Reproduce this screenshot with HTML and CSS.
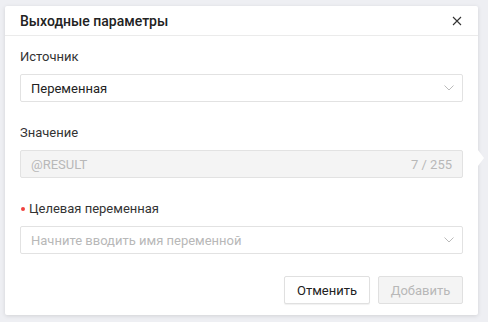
FILE: index.html
```html
<!DOCTYPE html>
<html lang="ru">
<head>
<meta charset="utf-8">
<link rel="stylesheet" href="styles.css">
</head>
<body>
<div class="popover">
  <div class="header">
    <span class="title">Выходные параметры</span>
    <svg class="close" width="10" height="10" viewBox="0 0 10 10"><path d="M1 1L9 9M9 1L1 9" stroke="#333" stroke-width="1.1" fill="none"/></svg>
  </div>
  <div class="body">
    <div class="field">
      <div class="label">Источник</div>
      <div class="input select">
        <span class="value">Переменная</span>
        <svg class="chev" width="10" height="6" viewBox="0 0 10 6"><path d="M0.5 0.5L5 5L9.5 0.5" stroke="#bbb" stroke-width="1" fill="none"/></svg>
      </div>
    </div>
    <div class="field">
      <div class="label">Значение</div>
      <div class="input disabled">
        <span class="value muted">@RESULT</span>
        <span class="counter">7 / 255</span>
      </div>
    </div>
    <div class="field">
      <div class="label required">Целевая переменная</div>
      <div class="input select">
        <span class="value placeholder">Начните вводить имя переменной</span>
        <svg class="chev" width="10" height="6" viewBox="0 0 10 6"><path d="M0.5 0.5L5 5L9.5 0.5" stroke="#bbb" stroke-width="1" fill="none"/></svg>
      </div>
    </div>
    <div class="actions">
      <button class="btn">Отменить</button>
      <button class="btn btn-disabled">Добавить</button>
    </div>
  </div>
  <div class="arrow"></div>
</div>
</body>
</html>
```
FILE: styles.css
```css
* { box-sizing: border-box; }
html, body { margin: 0; padding: 0; }
body {
  width: 488px;
  height: 322px;
  background: #eeeff3;
  font-family: Roboto, "Liberation Sans", sans-serif;
  color: #222;
  padding: 6px 10px 0 5px;
}
.popover {
  position: relative;
  width: 473px;
  height: 309px;
  background: #fff;
  border-radius: 2px;
  box-shadow: 0 1px 4px rgba(0,0,0,0.12);
}
.header {
  height: 30px;
  display: flex;
  align-items: center;
  justify-content: space-between;
  padding: 0 16px 0 15px;
  border-bottom: 1px solid #ebebeb;
}
.title {
  font-size: 14px;
  font-weight: 500;
  color: #222;
}
.close { display: block; }
.body {
  padding: 13px 15px 0 15px;
}
.field { margin-bottom: 23px; }
.label {
  font-size: 13px;
  line-height: 16px;
  color: #333;
  margin-bottom: 9px;
  display: flex;
  align-items: center;
}
.label.required::before {
  content: "";
  width: 4px;
  height: 4px;
  border-radius: 50%;
  background: #f0413f;
  margin: 0 4px 0 1px;
}
.input {
  height: 28px;
  border: 1px solid #e2e2e2;
  border-radius: 2px;
  display: flex;
  align-items: center;
  justify-content: space-between;
  padding: 0 8px 0 10px;
  font-size: 13px;
}
.input.disabled { background: #f4f4f4; padding-right: 10px; }
.value { color: #222; }
.value.muted, .value.placeholder, .counter { color: #b8b8b8; }
.chev { display: block; }
.actions {
  display: flex;
  justify-content: flex-end;
  gap: 8px;
  margin-top: -1px;
}
.btn {
  height: 28px;
  width: 86px;
  padding: 0;
  font-family: inherit;
  font-size: 13px;
  color: #222;
  background: #fff;
  border: 1px solid #e0e0e0;
  border-radius: 2px;
  box-shadow: 0 1px 1px rgba(0,0,0,0.06);
}
.btn-disabled {
  width: 85px;
  color: #b8b8b8;
  background: #f4f4f4;
  box-shadow: none;
}
.arrow {
  position: absolute;
  right: -6px;
  top: 144px;
  width: 0;
  height: 0;
  border-top: 8px solid transparent;
  border-bottom: 8px solid transparent;
  border-left: 6px solid #fff;
}
```
